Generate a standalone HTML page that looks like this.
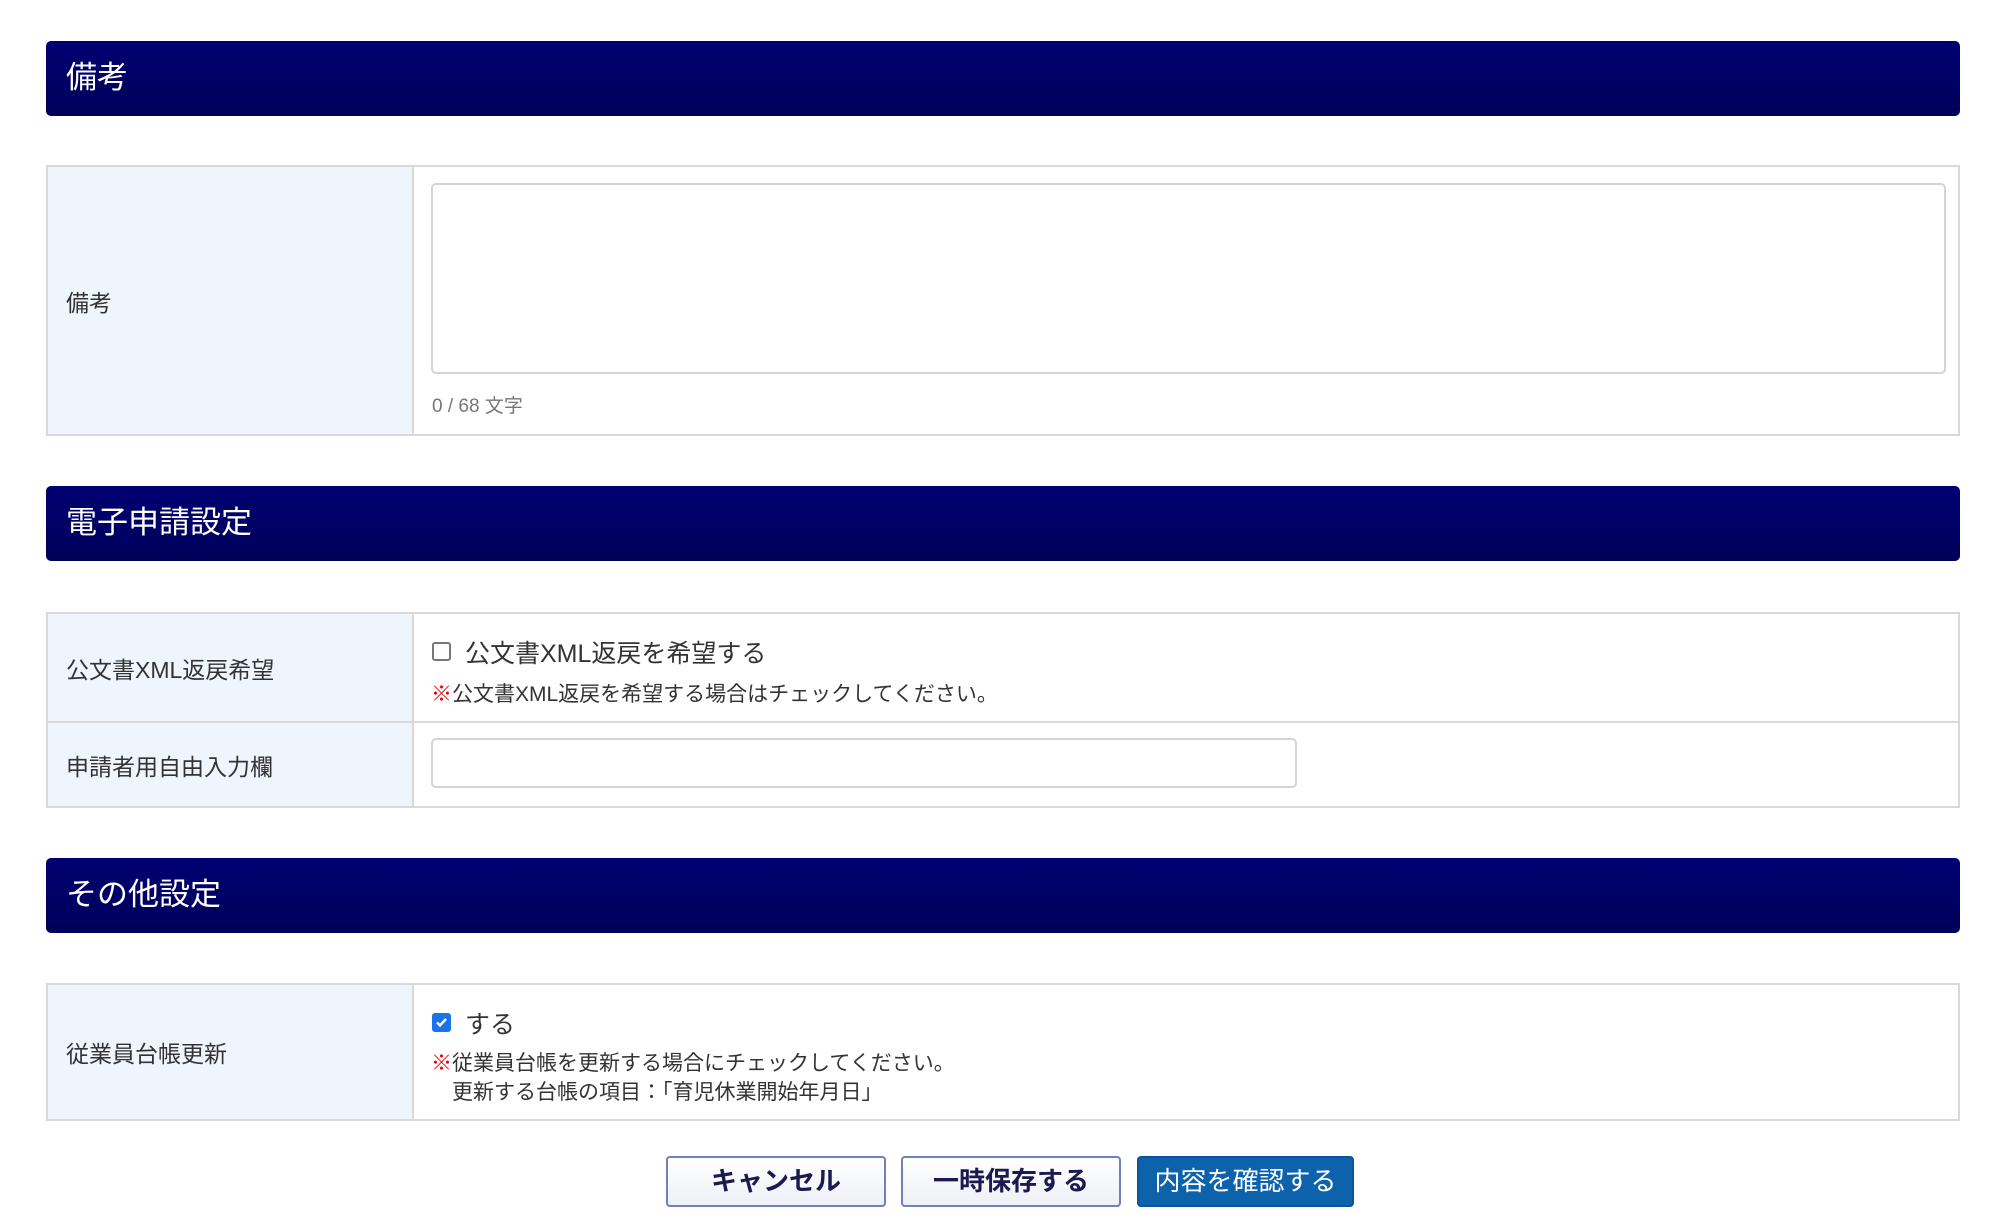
<!DOCTYPE html>
<html><head><meta charset="utf-8"><style>
*{box-sizing:border-box;margin:0;padding:0}
body{width:2000px;height:1230px;background:#fff;font-family:"Liberation Sans","Noto Sans CJK JP",sans-serif;color:#333;position:relative;overflow:hidden}
.h{position:absolute;left:46px;width:1914px;height:75px;border-radius:5px;background:linear-gradient(#000072,#00005a);color:#fff;font-size:31px;padding-left:20px;line-height:73px}
.t{position:absolute;left:46px;width:1914px;border:2px solid #d9d9d9;background:#fff}
.lab{position:absolute;left:0;width:366px;background:#eef5fd;border-right:2px solid #d9d9d9;font-size:23px;padding-left:18px;display:flex;align-items:center}
.a{position:absolute}
.cb{position:absolute;width:19px;height:19px;border:2px solid #777;border-radius:3px;background:#fff}
.cb.on{background:#1a73e8;border-color:#1a73e8}
.note{font-size:21px;color:#333}
.k{color:#e00}
.btn{position:absolute;top:1156px;height:51px;border-radius:4px;font-size:26px;text-align:center;line-height:47px}
.w{border:2px solid #6f7fbf;background:linear-gradient(#fff,#eef0f6);color:#1a1a50;font-weight:bold}
</style></head><body>
<div class="h" style="top:41px">備考</div>
<div class="t" style="top:165px;height:271px">
 <div class="lab" style="top:0;height:267px">備考</div>
 <div class="a" style="left:383px;top:16px;width:1515px;height:191px;border:2px solid #d4d4d4;border-radius:5px"></div>
 <div class="a" style="left:384px;top:224px;font-size:19px;color:#777">0 / 68 文字</div>
</div>
<div class="h" style="top:486px">電子申請設定</div>
<div class="t" style="top:612px;height:196px">
 <div class="lab" style="top:0;height:108px">公文書XML返戻希望</div>
 <div class="a" style="left:0;top:107px;width:1910px;border-top:2px solid #d9d9d9"></div>
 <div class="lab" style="top:109px;height:83px">申請者用自由入力欄</div>
 <div class="cb" style="left:384px;top:28px"></div>
 <div class="a" style="left:417px;top:20px;font-size:25px">公文書XML返戻を希望する</div>
 <div class="a note" style="left:383px;top:64px"><span class="k">※</span>公文書XML返戻を希望する場合はチェックしてください。</div>
 <div class="a" style="left:383px;top:124px;width:866px;height:50px;border:2px solid #d4d4d4;border-radius:5px"></div>
</div>
<div class="h" style="top:858px">その他設定</div>
<div class="t" style="top:983px;height:138px">
 <div class="lab" style="top:0;height:134px">従業員台帳更新</div>
 <div class="cb on" style="left:384px;top:28px"><svg width="15" height="15" viewBox="0 0 15 15" style="position:absolute;left:0;top:0"><path d="M3 7.5l3 3 6-6.5" stroke="#fff" stroke-width="2.4" fill="none"/></svg></div>
 <div class="a" style="left:417px;top:20px;font-size:25px">する</div>
 <div class="a note" style="left:383px;top:64px;line-height:29px"><span class="k">※</span>従業員台帳を更新する場合にチェックしてください。<br>&emsp;更新する台帳の項目：「育児休業開始年月日」</div>
</div>
<div class="btn w" style="left:666px;width:220px">キャンセル</div>
<div class="btn w" style="left:901px;width:220px">一時保存する</div>
<div class="btn" style="left:1137px;width:217px;background:#0d62ac;color:#fff;border:2px solid #0a559a">内容を確認する</div>
</body></html>
